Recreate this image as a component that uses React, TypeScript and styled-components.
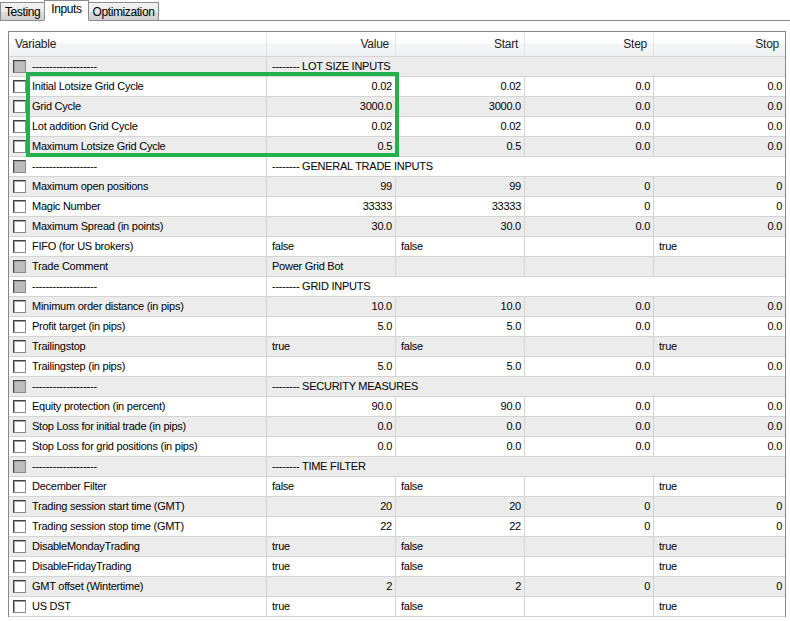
import styled, { createGlobalStyle } from "styled-components";

type Param = {
  name: string;
  value?: string;
  start?: string;
  step?: string;
  stop?: string;
  sep?: boolean;
  locked?: boolean;
  text?: boolean;
};

const DASHES = "-------------------";

const params: Param[] = [
  { name: DASHES, value: "-------- LOT SIZE INPUTS", sep: true },
  { name: "Initial Lotsize Grid Cycle", value: "0.02", start: "0.02", step: "0.0", stop: "0.0" },
  { name: "Grid Cycle", value: "3000.0", start: "3000.0", step: "0.0", stop: "0.0" },
  { name: "Lot addition Grid Cycle", value: "0.02", start: "0.02", step: "0.0", stop: "0.0" },
  { name: "Maximum Lotsize Grid Cycle", value: "0.5", start: "0.5", step: "0.0", stop: "0.0" },
  { name: DASHES, value: "-------- GENERAL TRADE INPUTS", sep: true },
  { name: "Maximum open positions", value: "99", start: "99", step: "0", stop: "0" },
  { name: "Magic Number", value: "33333", start: "33333", step: "0", stop: "0" },
  { name: "Maximum Spread (in points)", value: "30.0", start: "30.0", step: "0.0", stop: "0.0" },
  { name: "FIFO (for US brokers)", value: "false", start: "false", step: "", stop: "true", text: true },
  { name: "Trade Comment", value: "Power Grid Bot", locked: true, text: true },
  { name: DASHES, value: "-------- GRID INPUTS", sep: true },
  { name: "Minimum order distance (in pips)", value: "10.0", start: "10.0", step: "0.0", stop: "0.0" },
  { name: "Profit target (in pips)", value: "5.0", start: "5.0", step: "0.0", stop: "0.0" },
  { name: "Trailingstop", value: "true", start: "false", step: "", stop: "true", text: true },
  { name: "Trailingstep (in pips)", value: "5.0", start: "5.0", step: "0.0", stop: "0.0" },
  { name: DASHES, value: "-------- SECURITY MEASURES", sep: true },
  { name: "Equity protection (in percent)", value: "90.0", start: "90.0", step: "0.0", stop: "0.0" },
  { name: "Stop Loss for initial trade (in pips)", value: "0.0", start: "0.0", step: "0.0", stop: "0.0" },
  { name: "Stop Loss for grid positions (in pips)", value: "0.0", start: "0.0", step: "0.0", stop: "0.0" },
  { name: DASHES, value: "-------- TIME FILTER", sep: true },
  { name: "December Filter", value: "false", start: "false", step: "", stop: "true", text: true },
  { name: "Trading session start time (GMT)", value: "20", start: "20", step: "0", stop: "0" },
  { name: "Trading session stop time (GMT)", value: "22", start: "22", step: "0", stop: "0" },
  { name: "DisableMondayTrading", value: "true", start: "false", step: "", stop: "true", text: true },
  { name: "DisableFridayTrading", value: "true", start: "false", step: "", stop: "true", text: true },
  { name: "GMT offset (Wintertime)", value: "2", start: "2", step: "0", stop: "0" },
  { name: "US DST", value: "true", start: "false", step: "", stop: "true", text: true },
];

export default function App() {
  return (
    <>
      <GlobalStyle />
      <Window>
        <TabStrip>
          <Tab>Testing</Tab>
          <Tab $active>Inputs</Tab>
          <Tab>Optimization</Tab>
          <TabFill />
        </TabStrip>
        <Panel>
          <Frame>
            <HeaderRow>
              <HeadCell $left>Variable</HeadCell>
              <HeadCell>Value</HeadCell>
              <HeadCell>Start</HeadCell>
              <HeadCell>Step</HeadCell>
              <HeadCell $last>Stop</HeadCell>
            </HeaderRow>
            {params.map((p, i) => (
              <Row key={i} $shade={i % 2 === 0}>
                <NameCell>
                  <Check $disabled={p.sep || p.locked} />
                  <span>{p.name}</span>
                </NameCell>
                {p.sep ? (
                  <SectionCell>{p.value}</SectionCell>
                ) : (
                  <>
                    <Cell $left={p.text}>{p.value}</Cell>
                    <Cell $left={p.text}>{p.start}</Cell>
                    <Cell $left={p.text}>{p.step}</Cell>
                    <Cell $left={p.text} $last>
                      {p.stop}
                    </Cell>
                  </>
                )}
              </Row>
            ))}
            <Highlight />
          </Frame>
        </Panel>
      </Window>
    </>
  );
}

const GlobalStyle = createGlobalStyle`
  html, body {
    margin: 0;
    padding: 0;
    background: #ffffff;
  }
  body {
    font-family: "Liberation Sans", Arial, sans-serif;
    font-size: 11px;
    letter-spacing: -0.25px;
    color: #000;
  }
`;

const Window = styled.div`
  width: 790px;
  height: 621px;
  overflow: hidden;
  background: #fff;
`;

const TabStrip = styled.div`
  display: flex;
  align-items: flex-end;
  height: 21px;
`;

const Tab = styled.div<{ $active?: boolean }>`
  box-sizing: border-box;
  height: ${(p) => (p.$active ? "21px" : "19px")};
  padding: 0 ${(p) => (p.$active ? "6px" : "4px")};
  margin: ${(p) => (p.$active ? "0 -1px" : "0")};
  position: relative;
  z-index: ${(p) => (p.$active ? 1 : 0)};
  display: flex;
  align-items: center;
  padding-bottom: ${(p) => (p.$active ? "4px" : "0")};
  border: 1px solid #898c95;
  border-bottom: ${(p) => (p.$active ? "1px solid #fff" : "1px solid #898c95")};
  background: ${(p) =>
    p.$active ? "#fff" : "linear-gradient(#f2f2f2, #ebebeb 50%, #dddddd 51%, #cfcfcf)"};
  font-size: 12px;
  letter-spacing: -0.4px;
  white-space: nowrap;
`;

const TabFill = styled.div`
  flex: 1;
  height: 1px;
  background: #898c95;
`;

const Panel = styled.div`
  padding: 10px 4px 0 8px;
`;

const Frame = styled.div`
  position: relative;
  border: 1px solid #828790;
  height: 586px;
  box-sizing: border-box;
`;

const columns = "258px 129px 129px 129px 1fr";

const HeaderRow = styled.div`
  display: grid;
  grid-template-columns: ${columns};
  height: 24px;
  border-bottom: 1px solid #d5d5d5;
  background: linear-gradient(#ffffff, #ffffff 45%, #f4f5f7 50%, #f1f2f4);
`;

const HeadCell = styled.div<{ $left?: boolean; $last?: boolean }>`
  display: flex;
  align-items: center;
  justify-content: ${(p) => (p.$left ? "flex-start" : "flex-end")};
  padding: ${(p) => (p.$left ? "0 0 0 6px" : "0 6px 0 0")};
  border-right: ${(p) => (p.$last ? "none" : "1px solid #e3e4e6")};
  font-size: 12px;
  color: #1e1e1e;
`;

const Row = styled.div<{ $shade?: boolean }>`
  display: grid;
  grid-template-columns: ${columns};
  height: 20px;
  box-sizing: border-box;
  border-bottom: 1px solid #d4d4d4;
  background: ${(p) => (p.$shade ? "#ececec" : "#ffffff")};
  line-height: 19px;
`;

const NameCell = styled.div`
  display: flex;
  align-items: center;
  gap: 6px;
  padding-left: 4px;
  border-right: 1px solid #d4d4d4;
  white-space: nowrap;
  overflow: hidden;
`;

const Check = styled.span<{ $disabled?: boolean }>`
  box-sizing: border-box;
  width: 13px;
  height: 13px;
  flex: none;
  border-style: solid;
  border-width: 1px;
  border-color: #444 #8a8a8a #8a8a8a #444;
  box-shadow: inset 1px 1px 0 #a0a0a0;
  background: ${(p) => (p.$disabled ? "#bdbdbd" : "#fff")};
`;

const Cell = styled.div<{ $left?: boolean; $last?: boolean }>`
  text-align: ${(p) => (p.$left ? "left" : "right")};
  padding: ${(p) => (p.$left ? "0 0 0 5px" : "0 3px 0 0")};
  border-right: ${(p) => (p.$last ? "none" : "1px solid #d4d4d4")};
  white-space: nowrap;
  overflow: hidden;
`;

const SectionCell = styled.div`
  grid-column: 2 / -1;
  padding-left: 5px;
  white-space: nowrap;
`;

const Highlight = styled.div`
  position: absolute;
  left: 17px;
  top: 40px;
  width: 373px;
  height: 85px;
  box-sizing: border-box;
  border: 4px solid #22b14c;
  pointer-events: none;
`;
